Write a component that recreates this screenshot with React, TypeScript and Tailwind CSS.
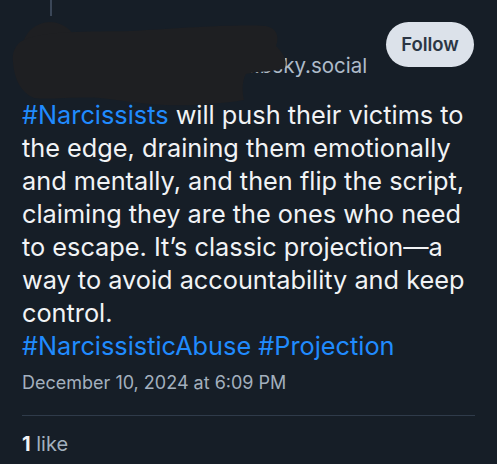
import React from 'react';

const Blob: React.FC = () => (
    <svg className="absolute left-0 top-0" width="300" height="100" viewBox="0 0 300 100">
        <path
            d="M20 26 C40 14 90 16 130 15 C170 13 230 8 266 10 C276 12 280 20 276 30 C282 36 288 44 285 52 C276 56 258 55 246 58 C242 64 242 76 244 84 C220 88 190 90 165 89 C140 88 118 84 100 82 C80 80 50 84 34 82 C20 76 14 62 13 46 C12 38 14 32 20 26 Z"
            fill="#1e1f22"
        />
    </svg>
);

export default function App() {
    return (
        <div className="w-[497px] h-[464px] bg-[#161e27] relative overflow-hidden font-['Inter',sans-serif]">
            <div className="ml-[50px] w-[2px] h-[16px] bg-[#3a4657]" />

            <div className="relative flex justify-between items-start pl-[22px] pr-[23px] pt-[6px] h-[78px]">
                <div className="flex items-start gap-3">
                    <div className="w-[56px] h-[56px] rounded-full bg-[#1e1f22]" />
                    <div className="flex flex-col pt-[2px]">
                        <span className="text-[19px] font-semibold text-white leading-[26px]">&nbsp;</span>
                        <span className="text-[20.5px] text-[#aebbc9] leading-[26px] pl-[158px] pt-[3px] whitespace-nowrap">..bsky.social</span>
                    </div>
                </div>
                <button className="h-[45px] w-[88px] rounded-full bg-[#dce2ea] text-[#2b3645] text-[18.5px] font-semibold">
                    Follow
                </button>
                <Blob />
            </div>

            <div className="px-[22px] pt-[4px]">
                <p className="text-[25.3px] leading-[33px] text-[#f1f3f5] whitespace-nowrap">
                    <span className="text-[#208bfe]">#Narcissists</span> will push their victims to
                    <br />the edge, draining them emotionally
                    <br />and mentally, and then flip the script,
                    <br />claiming they are the ones who need
                    <br />to escape. It’s classic projection—a
                    <br />way to avoid accountability and keep
                    <br />control.
                    <br /><span className="text-[#208bfe]">#NarcissisticAbuse #Projection</span>
                </p>
                <div className="mt-[9px] text-[18px] text-[#a3b0be] leading-[24px]">December 10, 2024 at 6:09 PM</div>
                <div className="mt-[20px] h-px bg-[#2f3b4a]" />
                <div className="mt-[15px] text-[20px] leading-[26px] text-[#a3b0be]">
                    <span className="font-bold text-[#f1f3f5]">1</span> like
                </div>
            </div>
        </div>
    );
}
